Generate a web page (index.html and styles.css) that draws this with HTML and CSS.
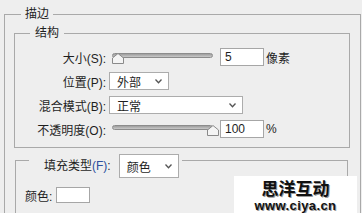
FILE: index.html
```html
<!DOCTYPE html>
<html lang="zh-CN">
<head>
    <meta charset="UTF-8">
    <title>描边</title>
    <link rel="stylesheet" href="styles.css">
</head>
<body>

<div id="panel">
    <fieldset class="group outer">
        <legend class="title">描边</legend>

        <fieldset class="group struct">
            <legend class="title sub">结构</legend>
            <div class="rows">
                <div class="row">
                    <label class="label">大小(S):</label>
                    <div class="slider">
                        <div class="track"></div>
                        <svg class="thumb thumb-min" width="12" height="11" viewBox="0 0 12 11">
                            <path d="M6 0.5 L11.5 5 L11.5 10.5 L0.5 10.5 L0.5 5 Z" fill="#f4f4f4" stroke="#8a8a8a"/>
                        </svg>
                    </div>
                    <div class="field">5</div>
                    <span class="unit">像素</span>
                </div>
                <div class="row">
                    <label class="label">位置(P):</label>
                    <div class="dropdown small">
                        <span>外部</span>
                        <svg width="7" height="5" viewBox="0 0 7 5"><path d="M0.5 0.5 L3.5 3.8 L6.5 0.5" fill="none" stroke="#555" stroke-width="1.3"/></svg>
                    </div>
                </div>
                <div class="row">
                    <label class="label">混合模式(B):</label>
                    <div class="dropdown wide">
                        <span>正常</span>
                        <svg width="7" height="5" viewBox="0 0 7 5"><path d="M0.5 0.5 L3.5 3.8 L6.5 0.5" fill="none" stroke="#555" stroke-width="1.3"/></svg>
                    </div>
                </div>
                <div class="row">
                    <label class="label">不透明度(O):</label>
                    <div class="slider">
                        <div class="track"></div>
                        <svg class="thumb thumb-max" width="12" height="11" viewBox="0 0 12 11">
                            <path d="M6 0.5 L11.5 5 L11.5 10.5 L0.5 10.5 L0.5 5 Z" fill="#f4f4f4" stroke="#8a8a8a"/>
                        </svg>
                    </div>
                    <div class="field">100</div>
                    <span class="unit">%</span>
                </div>
            </div>
        </fieldset>

        <fieldset class="group fill">
            <legend class="fill-legend">
                <span class="fill-label">填充类型<span class="key">(F)</span>:</span>
                <div class="dropdown small tall">
                    <span>颜色</span>
                    <svg width="7" height="5" viewBox="0 0 7 5"><path d="M0.5 0.5 L3.5 3.8 L6.5 0.5" fill="none" stroke="#555" stroke-width="1.3"/></svg>
                </div>
            </legend>
            <div class="color-row">
                <span>颜色:</span>
                <div class="swatch"></div>
            </div>
        </fieldset>
    </fieldset>

    <div class="watermark">
        <div class="wm-title">思洋互动</div>
        <div class="wm-url">www.ciya.cn</div>
    </div>
</div>

</body>
</html>
```

FILE: styles.css
```css
html, body {
    margin: 0;
    height: 213px;
    overflow: hidden;
    background: #eeeeee;
}

#panel {
    position: relative;
    font-family: "Liberation Sans", "Noto Sans CJK SC", sans-serif;
    font-size: 12px;
    color: #1e1e1e;
}

.group {
    border: 1px solid #a9a9a9;
    min-width: 0;
}

.outer {
    margin: 6px 1px 0 4px;
    padding: 0 10px 40px 9px;
}

.title {
    margin-left: 7px;
    padding: 0 4px;
    line-height: 16px;
}

.struct {
    margin: 3px 0 0 0;
    padding: 0 0 9px 0;
}

.title.sub {
    margin-left: 15px;
    padding: 0 5px;
}

.rows {
    display: flex;
    flex-direction: column;
    gap: 6px;
    padding-top: 7px;
}

.row {
    display: flex;
    align-items: center;
    height: 18px;
}

.label {
    width: 91px;
    margin-right: 3px;
    text-align: right;
}

.slider {
    position: relative;
    width: 107px;
    height: 18px;
    margin-left: 3px;
    margin-right: 1px;
}

.track {
    margin-top: 5px;
    width: 101px;
    height: 5px;
    box-sizing: border-box;
    border: 1px solid #8c8c8c;
    border-radius: 3px;
    background: linear-gradient(#9d9d9d, #c9c9c9);
}

.thumb {
    position: absolute;
    top: 5px;
}

.thumb-min {
    left: 0;
}

.thumb-max {
    left: 95px;
}

.field {
    width: 44px;
    height: 18px;
    box-sizing: border-box;
    border: 1px solid #a6a6a6;
    background: #fff;
    padding-left: 4px;
    line-height: 16px;
}

.unit {
    margin-left: 2px;
}

.dropdown {
    display: flex;
    align-items: center;
    justify-content: space-between;
    box-sizing: border-box;
    height: 18px;
    padding: 0 6px 0 7px;
    border: 1px solid #acacac;
    background: #fff;
}

.dropdown.small {
    width: 60px;
}

.dropdown.wide {
    width: 134px;
}

.dropdown.tall {
    height: 24px;
    margin-left: 8px;
}

.fill {
    margin: 6px 2px 0 1px;
    padding: 21px 0 40px 9px;
}

/* legend sits after the fieldset's left padding, so only 4px more */
.fill-legend {
    display: flex;
    align-items: flex-start;
    height: 12px;
    margin-left: 4px;
    padding: 0 3px 0 15px;
}

.fill-label {
    line-height: 24px;
}

.key {
    color: #2d4f9e;
}

.color-row {
    display: flex;
    align-items: center;
    height: 16px;
}

.swatch {
    width: 34px;
    height: 16px;
    box-sizing: border-box;
    margin-left: 4px;
    border: 1px solid #a6a6a6;
    background: #fff;
}

.watermark {
    position: absolute;
    left: 234px;
    top: 170px;
    width: 123px;
    height: 38px;
    background: #fff;
    text-align: center;
    color: #111;
    font-weight: bold;
}

.wm-title {
    padding-top: 4px;
    font-size: 17px;
    line-height: 19px;
    text-shadow: 1px 1px 0 #9a9a9a;
}

.wm-url {
    font-size: 13px;
    line-height: 13px;
    letter-spacing: 0.4px;
    text-shadow: 1px 1px 0 #a0a0a0, -1px 0 0 #fff;
}
```
